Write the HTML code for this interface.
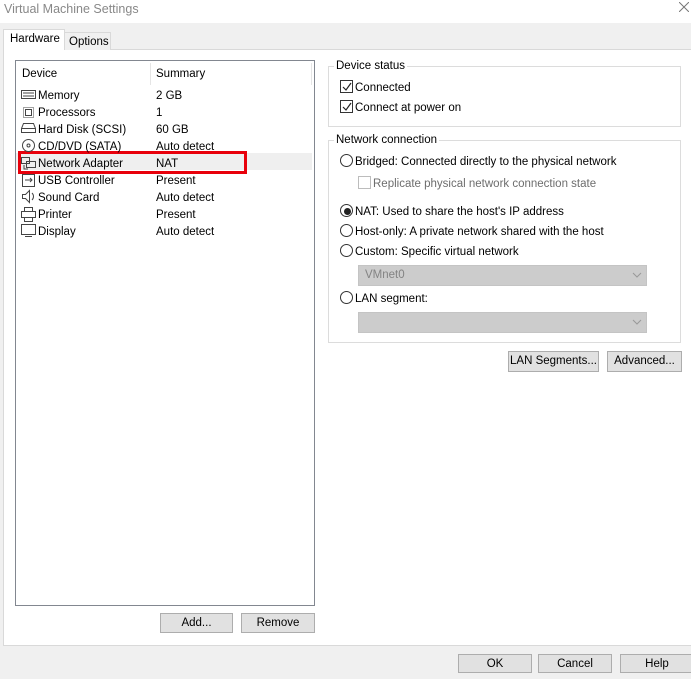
<!DOCTYPE html>
<html><head><style>
*{margin:0;padding:0;box-sizing:border-box}
body{width:691px;height:679px;background:#f0f0f0;font-family:"Liberation Sans",sans-serif;font-size:11.5px;color:#000;position:relative;overflow:hidden}
.a{position:absolute;white-space:nowrap}
.btn{position:absolute;background:#e1e1e1;border:1px solid #adadad;text-align:center;line-height:18px}
.cb{position:absolute;width:13px;height:13px;border:1px solid #333;background:#fff}
.rd{position:absolute;width:13px;height:13px;border:1px solid #333;border-radius:50%;background:#fff}
.grp{position:absolute;border:1px solid #dcdcdc}
.combo{position:absolute;background:#ccc;border:1px solid #c4c4c4;color:#838383;padding-left:6px;line-height:18px}
.t{position:absolute;white-space:nowrap;margin-top:2px}
</style></head><body>
<div class="a" style="left:0;top:0;width:691px;height:23px;background:#fff"></div>
<div class="a" style="left:4px;top:2px;color:#888;font-size:12.5px">Virtual Machine Settings</div>
<svg class="a" style="left:679px;top:2px" width="10" height="10"><path d="M0 0L10 10M10 0L0 10" stroke="#777" stroke-width="1"/></svg>
<div class="a" style="left:3px;top:49px;width:700px;height:597px;background:#fff;border:1px solid #d9d9d9"></div>
<div class="a" style="left:64px;top:32px;width:47px;height:18px;background:#f0f0f0;border:1px solid #d9d9d9;border-bottom:none;padding-left:4px;line-height:18px">Options</div>
<div class="a" style="left:3px;top:29px;width:62px;height:21px;background:#fff;border:1px solid #d9d9d9;border-bottom:none;padding-left:6px;line-height:18px">Hardware</div>
<div class="a" style="left:15px;top:60px;width:300px;height:546px;border:1px solid #828790;background:#fff"></div>
<div class="a" style="left:150px;top:63px;width:1px;height:22px;background:#e5e5e5"></div>
<div class="a" style="left:311px;top:63px;width:1px;height:22px;background:#e5e5e5"></div>
<div class="a" style="left:22px;top:68px">Device</div>
<div class="a" style="left:156px;top:68px">Summary</div>
<div class="a" style="left:16px;top:153px;width:296px;height:17px;background:#efefef"></div>
<div class="a" style="left:18px;top:151px;width:229px;height:23px;border:3px solid #e8000b"></div>
<div class="a" style="left:38px;top:88px;line-height:17px">Memory<br>Processors<br>Hard Disk (SCSI)<br>CD/DVD (SATA)<br>Network Adapter<br>USB Controller<br>Sound Card<br>Printer<br>Display</div>
<div class="a" style="left:156px;top:88px;line-height:17px">2 GB<br>1<br>60 GB<br>Auto detect<br>NAT<br>Present<br>Auto detect<br>Present<br>Auto detect</div>
<svg class="a" style="left:20px;top:88px" width="17" height="155" fill="none" stroke="#444" stroke-width="1">
<rect x="1.5" y="2.5" width="14" height="8"/><path d="M3 5h11M3 8h11"/>
<rect x="3.5" y="19.5" width="10" height="10" stroke-dasharray="1 1"/><rect x="5.5" y="21.5" width="6" height="6"/>
<path d="M1.5 44.5h14v-4l-2-5h-10l-2 5z M1.5 40.5h14"/>
<circle cx="8.5" cy="57.5" r="6"/><circle cx="8.5" cy="57.5" r="1.5"/>
<rect x="1.5" y="69.5" width="8" height="6"/><rect x="6.5" y="73.5" width="9" height="6"/><path d="M4 77v4h4"/>
<rect x="2.5" y="86.5" width="12" height="12"/><path d="M5 92h7M10 90l2 2-2 2"/>
<path d="M2.5 106.5h3l4-4v12l-4-4h-3z M12 105c2 2 2 5 0 7"/>
<rect x="4.5" y="119.5" width="8" height="4"/><rect x="1.5" y="123.5" width="14" height="6"/><rect x="4.5" y="129.5" width="8" height="4"/>
<rect x="1.5" y="136.5" width="14" height="10"/><path d="M5 148.5h7"/>
</svg>
<div class="btn" style="left:160px;top:613px;width:73px;height:20px">Add...</div>
<div class="btn" style="left:241px;top:613px;width:74px;height:20px">Remove</div>
<div class="grp" style="left:328px;top:66px;width:353px;height:61px"></div>
<div class="a" style="left:334px;top:60px;background:#fff;padding:0 2px">Device status</div>
<div class="cb" style="left:340px;top:80px"></div><div class="cb" style="left:340px;top:100px"></div>
<svg class="a" style="left:341px;top:81px" width="11" height="31" fill="none" stroke="#222" stroke-width="1.2"><path d="M2 6l3 3 5-7M2 26l3 3 5-7"/></svg>
<div class="t" style="left:355px;top:80px">Connected</div>
<div class="t" style="left:355px;top:100px">Connect at power on</div>
<div class="grp" style="left:328px;top:140px;width:353px;height:203px"></div>
<div class="a" style="left:334px;top:134px;background:#fff;padding:0 2px">Network connection</div>
<div class="rd" style="left:340px;top:154px"></div>
<div class="t" style="left:355px;top:154px">Bridged: Connected directly to the physical network</div>
<div class="cb" style="left:358px;top:176px;border-color:#bcbcbc"></div>
<div class="t" style="left:373px;top:176px;color:#6d6d6d">Replicate physical network connection state</div>
<div class="rd" style="left:340px;top:204px"></div><div class="a" style="left:344px;top:208px;width:7px;height:7px;border-radius:50%;background:#222"></div>
<div class="t" style="left:355px;top:204px">NAT: Used to share the host's IP address</div>
<div class="rd" style="left:340px;top:224px"></div>
<div class="t" style="left:355px;top:224px">Host-only: A private network shared with the host</div>
<div class="rd" style="left:340px;top:244px"></div>
<div class="t" style="left:355px;top:244px">Custom: Specific virtual network</div>
<div class="combo" style="left:358px;top:265px;width:289px;height:21px">VMnet0</div>
<div class="rd" style="left:340px;top:291px"></div>
<div class="t" style="left:355px;top:291px">LAN segment:</div>
<div class="combo" style="left:358px;top:312px;width:289px;height:21px"></div>
<svg class="a" style="left:632px;top:272px" width="10" height="55" fill="none" stroke="#999"><path d="M1 1l4 4 4-4M1 48l4 4 4-4"/></svg>
<div class="btn" style="left:508px;top:351px;width:91px;height:21px">LAN Segments...</div>
<div class="btn" style="left:607px;top:351px;width:75px;height:21px">Advanced...</div>
<div class="btn" style="left:458px;top:654px;width:74px;height:19px">OK</div>
<div class="btn" style="left:538px;top:654px;width:74px;height:19px">Cancel</div>
<div class="btn" style="left:620px;top:654px;width:74px;height:19px">Help</div>
</body></html>
